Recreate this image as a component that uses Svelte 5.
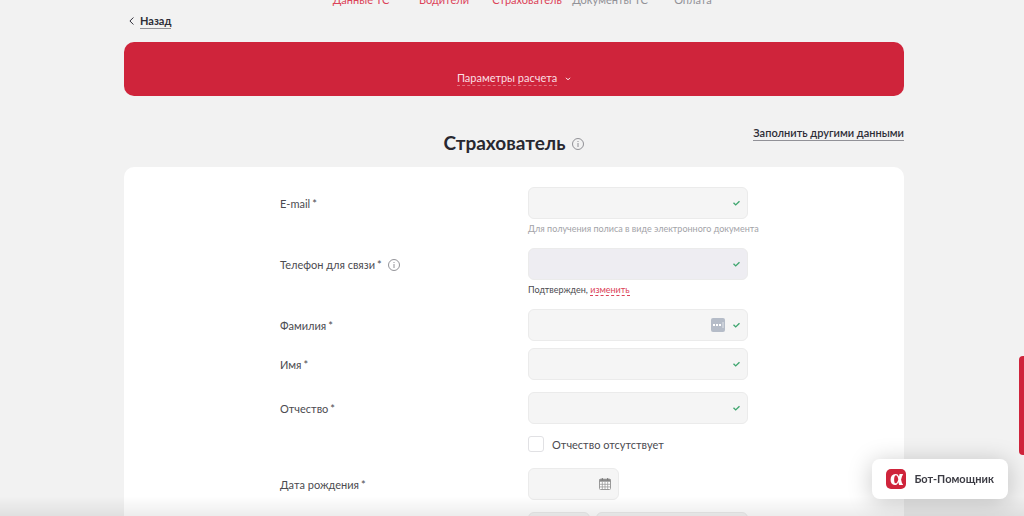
<script>
  const steps = [
    { title: 'Данные ТС', done: true },
    { title: 'Водители', done: true },
    { title: 'Страхователь', done: true },
    { title: 'Документы ТС', done: false },
    { title: 'Оплата', done: false }
  ];
  const fields = [
    { id: 'email', label: 'E-mail', type: 'email', note: 'hint' },
    { id: 'phone', label: 'Телефон для связи', type: 'tel', note: 'confirmed', info: true, locked: true },
    { id: 'surname', label: 'Фамилия', type: 'text', manager: true },
    { id: 'name', label: 'Имя', type: 'text' },
    { id: 'patronymic', label: 'Отчество', type: 'text' }
  ];
  let noPatronymic = $state(false);
</script>

{#snippet info()}
  <svg class="info" viewBox="0 0 12 12" aria-hidden="true">
    <circle cx="6" cy="6" r="5.5" />
    <path d="M6 5V9M6 3V4" />
  </svg>
{/snippet}

<div class="page">
  <div class="content">
    <nav class="steps">
      {#each steps as step}
        <span class:done={step.done}>{step.title}</span>
      {/each}
    </nav>

    <a class="back" href="#back">
      <svg viewBox="0 0 5 8" aria-hidden="true"><path d="M4.4.5L.9 4l3.5 3.5" /></svg>
      <span>Назад</span>
    </a>

    <section class="banner">
      <button type="button">
        <span>Параметры расчета</span>
        <svg viewBox="0 0 6 4" aria-hidden="true"><path d="M1 .8l2 2 2-2" /></svg>
      </button>
    </section>

    <header class="heading">
      <div class="title"><h1>Страхователь</h1>{@render info()}</div>
      <a class="fill" href="#fill">Заполнить другими данными</a>
    </header>

    <form class="card">
      {#each fields as field}
        <div class="row {field.id}">
          <label for={field.id}>
            <span>{field.label}<i>*</i></span>
            {#if field.info}{@render info()}{/if}
          </label>
          <div class="control">
            <div class="box" class:locked={field.locked}>
              <input id={field.id} type={field.type} readonly={field.locked} />
              {#if field.manager}
                <svg class="manager" viewBox="0 0 14 14" aria-hidden="true">
                  <rect width="14" height="14" rx="2" fill="#b5bcc8" />
                  <path d="M2 6h2v2H2zM5 6h2v2H5zM8 6h2v2H8z" fill="#fff" />
                  <path d="M12 4v6" stroke="#e1e5ea" />
                </svg>
              {/if}
              <svg class="check" viewBox="0 0 7 6" aria-hidden="true"><path d="M.5 2.8l2.2 2.1L6.5 1.3" /></svg>
            </div>
            {#if field.note === 'hint'}
              <p class="note hint">Для получения полиса в виде электронного документа</p>
            {:else if field.note === 'confirmed'}
              <p class="note">Подтвержден, <a href="#phone">изменить</a></p>
            {/if}
          </div>
        </div>
      {/each}

      <div class="row toggle">
        <label class="tick">
          <input type="checkbox" bind:checked={noPatronymic} />
          <span>Отчество отсутствует</span>
        </label>
      </div>

      <div class="row birth">
        <label for="birth"><span>Дата рождения<i>*</i></span></label>
        <div class="box short">
          <input id="birth" type="text" />
          <svg class="calendar" viewBox="0 0 12 12" aria-hidden="true">
            <rect x=".5" y="1.2" width="11" height="10.3" rx="1" fill="#fff" stroke="#999" />
            <path d="M.5 1.2h11v2.5H.5z" fill="#888" />
            <path d="M.5 6.3h11M.5 8.9h11M3.3 3.7v7.8M6 3.7v7.8M8.7 3.7v7.8" stroke="#999" stroke-width=".8" />
            <path d="M3.3 0v2.4M8.7 0v2.4" stroke="#777" />
          </svg>
        </div>
      </div>

      <div class="row">
        <div class="pair">
          <div class="box"><input type="text" aria-label="Серия" /></div>
          <div class="box"><input type="text" aria-label="Номер" /></div>
        </div>
      </div>
    </form>
  </div>

  <div class="shade"></div>
  <button class="side" type="button" aria-label="Обратная связь"></button>
  <button class="bot" type="button"><span class="logo">α</span>Бот-Помощник</button>
</div>

<style>
  :global(body) {
    background: #f2f2f2;
  }
  .page {
    height: 100vh;
    overflow: hidden;
    padding: 0 120px 0 124px;
    box-sizing: border-box;
    background: #f2f2f2;
    color: #4b4b50;
    font: 11px/16px Lato, Inter, "Liberation Sans", sans-serif;
  }
  button, input {
    font: inherit;
    color: inherit;
    border: 0;
    margin: 0;
    padding: 0;
    background: none;
  }
  a {
    color: inherit;
    text-decoration: none;
  }
  svg {
    flex: none;
    fill: none;
  }
  .steps {
    display: grid;
    grid-template-columns: repeat(5, 83px);
    justify-content: center;
    padding-left: 26px;
    margin-top: -8px;
    line-height: 16px;
    text-align: center;
    white-space: nowrap;
    color: #919197;
  }
  .done {
    color: #dc4358;
  }
  .back {
    display: flex;
    width: max-content;
    align-items: center;
    gap: 6px;
    margin: 5px 0 0 5px;
    color: #2d2d37;
    font-weight: 700;
    line-height: 16px;
  }
  .back span, .fill {
    border-bottom: 1px solid #919197;
  }
  .back span {
    line-height: 15px;
  }
  .back svg {
    width: 5px;
    height: 8px;
    stroke: #2d2d37;
  }
  .banner {
    display: flex;
    justify-content: center;
    margin-top: 13px;
    padding: 29px 0 10px;
    border-radius: 10px;
    background: #cf243b;
  }
  .banner button {
    display: flex;
    align-items: center;
    gap: 8px;
    line-height: 14px;
    color: #fbdfe3;
  }
  .banner span {
    border-bottom: 1px dashed #e06f7f;
  }
  .banner svg {
    width: 6px;
    height: 4px;
    stroke: #fff;
  }
  .heading {
    display: grid;
    grid-template-columns: 1fr auto 1fr;
    align-items: start;
    padding-top: 30px;
    height: 41px;
  }
  .title {
    grid-column: 2;
    display: flex;
    align-items: center;
    gap: 7px;
    padding-top: 5px;
  }
  h1 {
    margin: 0;
    color: #282830;
    font-size: 19px;
    line-height: 24px;
    font-weight: 700;
  }
  .info {
    width: 12px;
    height: 12px;
    stroke: #77777d;
    stroke-width: 0.8;
  }
  .title .info {
    margin-top: 2px;
  }
  .fill {
    justify-self: end;
    color: #2d2d37;
    font-weight: 600;
    line-height: 14px;
  }
  .card {
    padding: 20px 20%;
    border-radius: 10px;
    background: #fff;
  }
  .row {
    display: grid;
    grid-template-columns: 53% 47%;
    margin-bottom: 12px;
  }
  .row > label {
    display: flex;
    align-items: center;
    gap: 6px;
    height: 34px;
    margin-bottom: -2px;
  }
  .row i {
    margin-left: 2px;
    font-style: normal;
  }
  .surname {
    margin-bottom: 7px;
  }
  .box {
    display: flex;
    align-items: center;
    gap: 8px;
    height: 32px;
    box-sizing: border-box;
    padding: 0 7px;
    border: 1px solid #ebebeb;
    border-radius: 6px;
    background: #f5f5f5;
  }
  .locked {
    background: #eeedf2;
  }
  .box input {
    flex: 1;
    width: 100%;
    min-width: 0;
    outline: 0;
  }
  .check {
    width: 7px;
    height: 6px;
    stroke: #3fa66f;
    stroke-width: 1.4;
  }
  .manager {
    width: 14px;
    height: 14px;
  }
  .note {
    margin: 2px 0 -1px;
    font-size: 9px;
    line-height: 16px;
    white-space: nowrap;
  }
  .hint {
    color: #a3a3a8;
  }
  .note a {
    color: #dc4358;
    border-bottom: 1px dashed #dc4358;
  }
  .row .tick {
    grid-column: 2;
    gap: 8px;
    height: 16px;
    margin: 0;
  }
  .tick span {
    line-height: 16px;
    padding-top: 2px;
  }
  .tick input {
    appearance: none;
    width: 16px;
    height: 16px;
    border: 1px solid #e1e1e4;
    border-radius: 3px;
    background: #fff;
  }
  .tick input:checked {
    background: #cf243b;
  }
  .toggle {
    margin-bottom: 16px;
  }
  .short {
    width: 91px;
  }
  .calendar {
    width: 12px;
    height: 12px;
  }
  .pair {
    grid-column: 2;
    display: grid;
    grid-template-columns: 62px minmax(0, 1fr);
    gap: 6px;
  }
  .shade {
    position: fixed;
    inset: auto 0 0;
    height: 20px;
    background: linear-gradient(transparent, rgba(0, 0, 0, 0.07));
    pointer-events: none;
  }
  .side {
    position: fixed;
    right: 0;
    bottom: 61px;
    width: 5px;
    height: 99px;
    border-radius: 4px 0 0 4px;
    background: #cf243b;
  }
  .bot {
    position: fixed;
    right: 16px;
    bottom: 17px;
    display: flex;
    align-items: center;
    gap: 8px;
    padding: 10px 14px;
    border-radius: 8px;
    background: #fff;
    box-shadow: 0 3px 24px rgba(0, 0, 0, 0.22);
    color: #3c3c44;
    font-weight: 700;
  }
  .logo {
    width: 20px;
    height: 20px;
    border-radius: 5px;
    background: #cf243b;
    color: #fff;
    font: bold 24px/16px "Liberation Serif", serif;
    text-align: center;
  }
</style>
